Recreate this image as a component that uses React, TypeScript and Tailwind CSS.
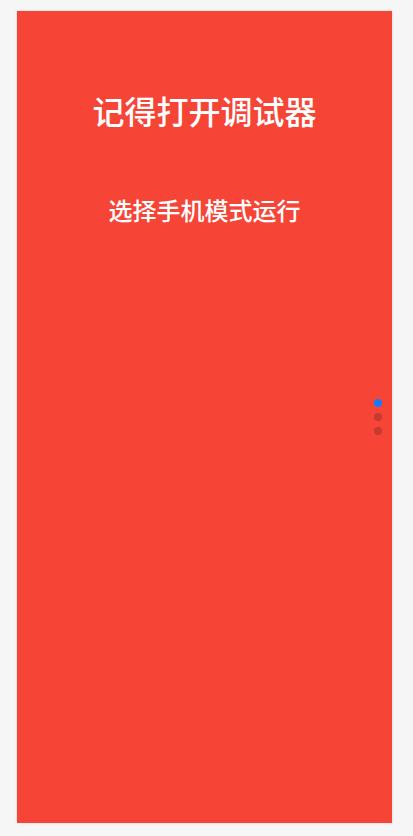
export default function App() {
  return (
    <div className="flex min-h-[836px] w-full bg-[#f6f6f6] pt-[11px] font-['Noto_Sans_CJK_SC',sans-serif]">
      <div className="relative ml-[17px] flex h-[812px] w-[375px] flex-col items-center bg-[#f64537] shadow-[0_0_2px_rgba(0,0,0,0.18)]">
        <h1 className="mt-[79px] text-[32px] leading-[40px] font-medium text-white">记得打开调试器</h1>
        <p className="mt-[64px] text-[24px] leading-[32px] font-medium text-white">选择手机模式运行</p>
        <div className="absolute top-[388px] right-[10px] flex flex-col gap-[6px]">
          <span className="h-[8px] w-[8px] rounded-full bg-[#127cff]" />
          <span className="h-[8px] w-[8px] rounded-full bg-[#c63a30]" />
          <span className="h-[8px] w-[8px] rounded-full bg-[#c63a30]" />
        </div>
      </div>
    </div>
  )
}
